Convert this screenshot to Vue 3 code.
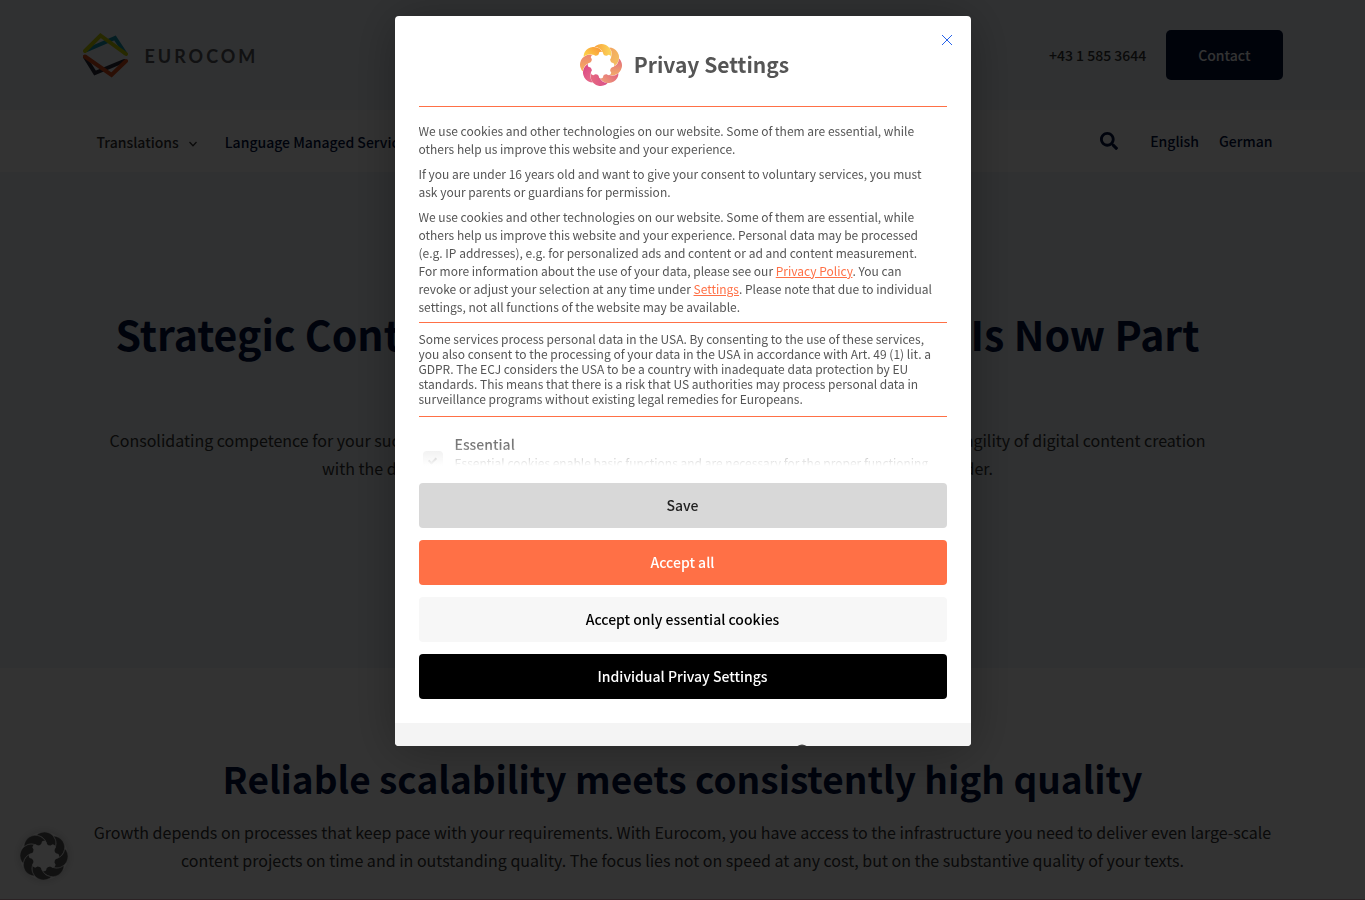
<script setup>
const SIZE = 42
const ring = Array.from({ length: 8 }, (_, k) => k)

// Points on the ring are measured clockwise from the top.
const polar = (radius, degrees) => {
  const a = (degrees * Math.PI) / 180
  return [SIZE / 2 + radius * Math.sin(a), SIZE / 2 - radius * Math.cos(a)]
    .map((n) => n.toFixed(2))
    .join(' ')
}

const petalRadius = 10
const petals = ring.map((k) => {
  const seam = k * 45 - 20
  return `M${polar(19.3, seam)} A${petalRadius} ${petalRadius} 0 1 1 ${polar(1.1, seam)} A${petalRadius} ${petalRadius} 0 0 0 ${polar(19.3, seam)}Z`
})

const gear = ring
  .map((k) => {
    const a = k * 45
    const lead = k ? 'L' : 'M'
    return `${lead}${polar(10.8, a - 13)} L${polar(12.8, a - 8)} Q${polar(14, a)} ${polar(12.8, a + 8)} L${polar(10.8, a + 13)} Q${polar(9.8, a + 22)} ${polar(10.8, a + 32)}`
  })
  .join(' ') + 'Z'

const petalColors = [
  ['#f9a03c', '#fbd75b'],
  ['#f3a05f', '#f3bf62'],
  ['#e2687f', '#f2ab68'],
  ['#e0567f', '#ee9c78'],
  ['#d94f8b', '#e6697f'],
  ['#e9738a', '#dc4a86'],
  ['#f6b25c', '#ec8471'],
  ['#fde04d', '#fa9a38'],
]
</script>

<template>
  <div class="page">
    <header class="topbar">
      <div class="container topbar-inner">
        <a class="brand" href="#" aria-label="Eurocom">
          <svg class="brand-mark" width="48" height="48" viewBox="1 0 48 48" fill="none" stroke-width="4" stroke-linejoin="miter" stroke-linecap="round">
            <path d="M5 19 L33 7 L43 22" stroke="#1795ad" />
            <path d="M3 20 L18.500 4.500 L44 23" stroke="#c3cc00" />
            <path d="M3 26 L13 42 L42 30" stroke="#2c2c38" />
            <path d="M3 25.500 L29.500 44 L44 30" stroke="#d64a1c" />
          </svg>
          <span class="brand-name">EUROCOM</span>
        </a>
        <div class="topbar-actions">
          <a class="phone" href="#">+43 1 585 3644</a>
          <a class="contact" href="#">Contact</a>
        </div>
      </div>
    </header>

    <nav class="mainnav">
      <div class="container mainnav-inner">
        <a class="nav-link current" href="#">Translations
          <svg width="8" height="6" viewBox="0 0 8 6" fill="none" stroke="currentColor" stroke-width="1.3"><path d="M.5 1 L4 4.700 L7.500 1" /></svg>
        </a>
        <a class="nav-link" href="#">Language Managed Services</a>
        <div class="nav-tools">
          <button class="search" type="button" aria-label="Search">
            <svg width="18" height="18" viewBox="0 0 512 512" fill="currentColor"><path d="M505 442.700L405.300 343c-4.500-4.500-10.600-7-17-7H372c27.600-35.300 44-79.700 44-128C416 93.100 322.900 0 208 0S0 93.100 0 208s93.100 208 208 208c48.300 0 92.700-16.400 128-44v16.300c0 6.400 2.500 12.500 7 17l99.700 99.700c9.400 9.400 24.600 9.400 33.900 0l28.300-28.300c9.400-9.400 9.400-24.600.1-34zM208 336c-70.700 0-128-57.200-128-128 0-70.700 57.200-128 128-128 70.700 0 128 57.200 128 128 0 70.700-57.200 128-128 128z" /></svg>
          </button>
          <a class="nav-link" href="#">English</a>
          <a class="nav-link" href="#">German</a>
        </div>
      </div>
    </nav>

    <section class="hero">
      <div class="container hero-inner">
        <h1 class="hero-title"><span>Strategic Content</span><span>Is Now Part</span></h1>
        <p class="hero-line wide"><span>Consolidating competence for your success</span><span>agility of digital content creation</span></p>
        <p class="hero-line short"><span>with the d</span><span>der.</span></p>
      </div>
    </section>

    <section class="quality">
      <div class="container">
        <h2>Reliable scalability meets consistently high quality</h2>
        <p>Growth depends on processes that keep pace with your requirements. With Eurocom, you have access to the infrastructure you need to deliver even large-scale content projects on time and in outstanding quality. The focus lies not on speed at any cost, but on the substantive quality of your texts.</p>
      </div>
    </section>
    <div class="accent-band"></div>

    <button class="widget" type="button" aria-label="Open privacy settings">
      <svg width="48" height="48" viewBox="0 0 42 42">
        <mask id="widget-hole"><rect width="42" height="42" fill="#fff" /><path :d="gear" fill="#000" /></mask>
        <g mask="url(#widget-hole)" fill="#555" stroke="#eee" stroke-width=".5">
          <path v-for="d in petals" :key="d" :d="d" />
        </g>
      </svg>
    </button>

    <div class="overlay">
      <div class="dialog" role="dialog" aria-modal="true" aria-labelledby="dialog-title">
        <button class="close" type="button" aria-label="Close">
          <svg width="10" height="10" viewBox="0 0 10 10" stroke="currentColor" stroke-width="1"><path d="M0 0 L10 10 M10 0 L0 10" /></svg>
        </button>

        <div class="dialog-main">
          <div class="dialog-head">
            <svg width="42" height="42" viewBox="0 0 42 42">
              <defs>
                <linearGradient v-for="(c, i) in petalColors" :id="`petal-${i}`" :key="i" :gradientTransform="`rotate(${i * 45} .5 .5)`">
                  <stop offset="0" :stop-color="c[0]" />
                  <stop offset="1" :stop-color="c[1]" />
                </linearGradient>
                <mask id="logo-hole"><rect width="42" height="42" fill="#fff" /><path :d="gear" fill="#000" /></mask>
              </defs>
              <g mask="url(#logo-hole)">
                <path v-for="(d, i) in petals" :key="d" :d="d" :fill="`url(#petal-${i})`" />
              </g>
            </svg>
            <h3 id="dialog-title">Privay Settings</h3>
          </div>

          <div class="scroll">
            <div class="intro">
              <p>We use cookies and other technologies on our website. Some of them are essential, while<br>others help us improve this website and your experience.</p>
              <p>If you are under 16 years old and want to give your consent to voluntary services, you must<br>ask your parents or guardians for permission.</p>
              <p>We use cookies and other technologies on our website. Some of them are essential, while<br>others help us improve this website and your experience. Personal data may be processed<br>(e.g. IP addresses), e.g. for personalized ads and content or ad and content measurement.<br>For more information about the use of your data, please see our <a href="#">Privacy Policy</a>. You can<br>revoke or adjust your selection at any time under <a href="#">Settings</a>. Please note that due to individual<br>settings, not all functions of the website may be available.</p>
            </div>
            <p class="notice">Some services process personal data in the USA. By consenting to the use of these services,<br>you also consent to the processing of your data in the USA in accordance with Art. 49 (1) lit. a<br>GDPR. The ECJ considers the USA to be a country with inadequate data protection by EU<br>standards. This means that there is a risk that US authorities may process personal data in<br>surveillance programs without existing legal remedies for Europeans.</p>
            <div class="group">
              <input id="essential" class="tick" type="checkbox" checked disabled>
              <div>
                <label for="essential">Essential</label>
                <p>Essential cookies enable basic functions and are necessary for the proper functioning</p>
              </div>
            </div>
          </div>

          <div class="actions">
            <button class="save" type="button">Save</button>
            <button class="accept" type="button">Accept all</button>
            <button class="essential-only" type="button">Accept only essential cookies</button>
            <button class="individual" type="button">Individual Privay Settings</button>
          </div>
        </div>

        <div class="dialog-foot">
          <svg width="16" height="16" viewBox="0 0 16 16" fill="#444"><circle cx="8" cy="8" r="7.500" /></svg>
        </div>
      </div>
    </div>
  </div>
</template>

<style>
body {
  overflow: hidden;
}
</style>

<style scoped>
.page {
  height: 100vh;
  overflow: hidden;
  background: #fff;
  color: #333;
  font-family: "Noto Sans CJK SC", "Noto Sans", sans-serif;
  font-size: 16px;
  line-height: 28px;
}
h1, h2, h3, p { margin: 0; }
a { color: inherit; text-decoration: none; }
button { border: 0; padding: 0; font: inherit; cursor: pointer; }
svg { display: block; }

.container {
  box-sizing: border-box;
  max-width: 1200px;
  margin: 0 auto;
}
.topbar { background: #eef3f7; }
.topbar-inner {
  display: flex;
  align-items: center;
  justify-content: space-between;
  min-height: 110px;
}
.brand { display: flex; align-items: center; gap: 14px; }
.brand-name {
  padding-top: 2px;
  font-family: Lato, sans-serif;
  font-size: 18px;
  font-weight: 700;
  letter-spacing: 3px;
  color: #55555c;
}
.topbar-actions { display: flex; align-items: center; gap: 20px; font-size: 14px; font-weight: 500; }
.contact {
  padding: 11px 32px;
  border-radius: 5px;
  background: #000f36;
  color: #fff;
}

.mainnav { background: #fff; font-size: 14px; font-weight: 500; color: #00113f; }
.mainnav-inner {
  display: flex;
  align-items: center;
  gap: 28px;
  min-height: 62px;
  padding: 0 10px 0 14px;
}
.nav-link { display: flex; align-items: center; gap: 10px; white-space: nowrap; }
.current { color: #333; }
.current svg { margin-top: 4px; }
.mainnav-inner > .nav-link { padding-top: 2px; }
.nav-tools { display: flex; align-items: center; gap: 20px; margin-left: auto; }
.search { margin-right: 12px; background: none; color: #00113f; }

.hero { background: #eef3f7; min-height: 496px; }
.hero-inner { padding: 136px 50px 0 0; }
.hero-title, .hero-line {
  display: flex;
  justify-content: space-between;
  margin: 0 auto;
  white-space: nowrap;
}
.hero-title {
  max-width: 1084px;
  margin-bottom: 68px;
  font-size: 41px;
  line-height: 50px;
  color: #00113f;
}
.wide { max-width: 1096px; }
.short { max-width: 671px; }

.quality { padding: 85px 0 25px; text-align: center; }
.quality h2 { margin-bottom: 15px; font-size: 37px; line-height: 50px; color: #00113f; }
.accent-band { height: 80px; background: #d4a8b6; }

.widget {
  position: fixed;
  left: 20px;
  bottom: 20px;
  border-radius: 50%;
  background: none;
  box-shadow: 0 0 10px rgba(0, 0, 0, .2);
}

.overlay {
  position: fixed;
  inset: 0;
  padding: 16px;
  background: rgba(0, 0, 0, .8);
}
.dialog {
  position: relative;
  box-sizing: border-box;
  max-width: 576px;
  max-height: calc(100vh - 170px);
  margin: 0 auto;
  overflow: hidden;
  border-radius: 4px;
  background: #fff;
  box-shadow: 0 4px 50px rgba(0, 0, 0, .3);
  color: #555;
  font-size: 12px;
  line-height: 18px;
}
.close {
  position: absolute;
  top: 19px;
  right: 19px;
  background: none;
  color: #2563eb;
}
.dialog-main { padding: 0 24px 24px; }
.dialog-head {
  display: flex;
  align-items: center;
  justify-content: center;
  gap: 12px;
  padding: 28px 0 20px 4px;
  border-bottom: 1px solid #ff7046;
}
.dialog-head h3 { padding-bottom: 2px; font-size: 21px; line-height: 30px; }
.scroll {
  position: relative;
  max-height: 359px;
  overflow: hidden;
}
.scroll::after {
  content: "";
  position: absolute;
  inset: auto 0 0;
  height: 20px;
  background: linear-gradient(rgba(255, 255, 255, 0), #fff);
}
.intro {
  display: flex;
  flex-direction: column;
  gap: 7px;
  padding: 15px 0 6px;
}
.intro a { color: #ff7046; text-decoration: underline; }
.notice {
  padding: 8px 0 10px;
  border: solid #ff7046;
  border-width: 1px 0;
  line-height: 15px;
}
.group { display: flex; gap: 12px; padding: 17px 0 0 4px; }
.group label { display: block; font-size: 14px; font-weight: 500; line-height: 20px; color: #777; }
.group p { color: #888; }
.tick {
  appearance: none;
  display: grid;
  place-items: center;
  width: 20px;
  height: 20px;
  margin: 17px 0 0;
  border-radius: 4px;
  background: #eee;
}
.tick::before {
  content: "";
  width: 3px;
  height: 6px;
  margin-bottom: 2px;
  border: solid #aaa;
  border-width: 0 2px 2px 0;
  transform: rotate(45deg);
}
.actions { display: flex; flex-direction: column; gap: 12px; margin-top: 17px; }
.actions button {
  height: 45px;
  padding-bottom: 2px;
  border-radius: 4px;
  font-size: 14px;
  font-weight: 500;
}
.save { background: #d8d8d8; color: #222; }
.accept { background: #ff7046; color: #fff; }
.essential-only { background: #f7f7f7; color: #000; }
.individual { background: #000; color: #fff; }
.dialog-foot {
  display: flex;
  justify-content: center;
  padding: 21px 0 20px 238px;
  background: #f4f4f4;
}
</style>
